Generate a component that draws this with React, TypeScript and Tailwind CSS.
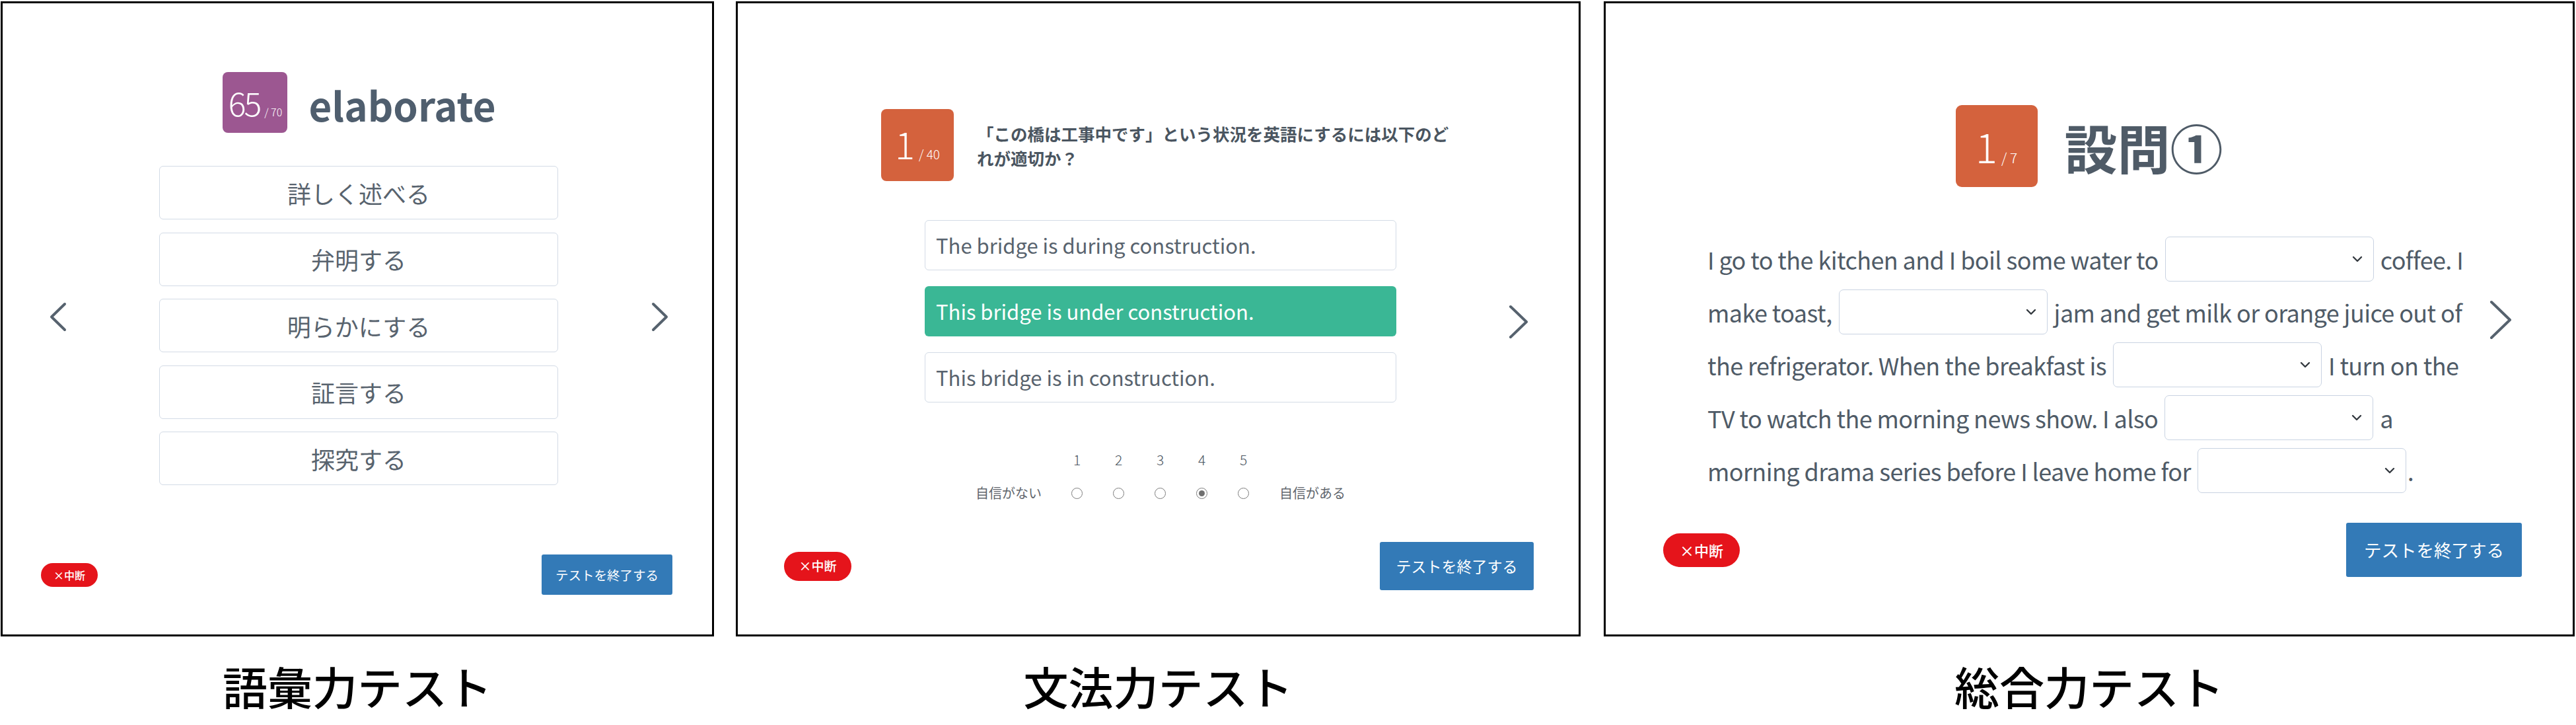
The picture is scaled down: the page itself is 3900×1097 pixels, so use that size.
import React from 'react';

const FONT = "font-['Noto_Sans_CJK_JP','Noto_Sans',sans-serif]";

const Chevron: React.FC<{ dir: 'left' | 'right'; w: number; h: number; className?: string }> = ({ dir, w, h, className }) => {
  const pts = dir === 'left' ? `${w - 3},3 3,${h / 2} ${w - 3},${h - 3}` : `3,3 ${w - 3},${h / 2} 3,${h - 3}`;
  return (
    <svg width={w} height={h} viewBox={`0 0 ${w} ${h}`} className={className}>
      <polyline points={pts} fill="none" stroke="#56626e" strokeWidth={4} strokeLinecap="round" strokeLinejoin="round" />
    </svg>
  );
};

const SelectBox: React.FC = () => (
  <div className="inline-flex w-[316px] h-[68px] shrink-0 items-center justify-end pr-[16px] border-[1.5px] border-[#c9d3e2] rounded-[7px] bg-white">
    <svg width="16" height="10" viewBox="0 0 16 10">
      <polyline points="2,2 8,8 14,2" fill="none" stroke="#343a40" strokeWidth={2.4} strokeLinecap="round" strokeLinejoin="round" />
    </svg>
  </div>
);

const Label: React.FC<{ text: string }> = ({ text }) => (
  <div className="mt-[41px] text-[68px] leading-none font-medium text-black">{text}</div>
);

// 語彙力テスト
const VocabPanel: React.FC = () => (
  <div className="w-[1080px] h-[961px] border-[3px] border-black flex flex-col bg-white">
    {/* header */}
    <div className="mt-[104px] flex justify-center items-center gap-[32px] pl-[6px]">
      <div className="w-[98px] h-[92px] rounded-[8px] bg-[#9c5791] flex items-baseline justify-center pt-[20px] text-white">
        <span className="text-[50px] font-extralight leading-none tracking-[-3px]">65</span>
        <span className="text-[16px] font-light leading-none ml-[7px]">/ 70</span>
      </div>
      <div className="text-[60px] font-bold leading-none text-[#4f5e6e] mt-[6px]">elaborate</div>
    </div>

    {/* options */}
    <div className="mt-[50px] flex items-start pl-[71px]">
      <Chevron dir="left" w={26} h={45} className="mt-[206px]" />
      <div className="ml-[140px] w-[604px] flex flex-col gap-[19.5px]">
        {['詳しく述べる', '弁明する', '明らかにする', '証言する', '探究する'].map((t) => (
          <div key={t} className="h-[81px] border-[1.5px] border-[#d3dbe6] rounded-[6px] flex items-center justify-center text-[36px] text-[#58636e]">
            {t}
          </div>
        ))}
      </div>
      <Chevron dir="right" w={26} h={45} className="ml-[141px] mt-[206px]" />
    </div>

    {/* footer */}
    <div className="mt-auto flex justify-between items-center pl-[58px] pr-[60px] pb-[60px]">
      <div className="w-[86px] h-[36px] rounded-full bg-[#e5141b] text-white text-[16px] font-medium flex items-center justify-center">×中断</div>
      <div className="w-[198px] h-[61px] rounded-[3px] bg-[#337ab7] text-white text-[19.5px] flex items-center justify-center">テストを終了する</div>
    </div>
  </div>
);

// 文法力テスト
const GrammarPanel: React.FC = () => (
  <div className="w-[1279px] h-[961px] border-[3px] border-black flex flex-col bg-white">
    {/* question */}
    <div className="mt-[160px] flex items-center pl-[217px]">
      <div className="w-[110px] h-[109px] rounded-[8px] bg-[#d4623d] flex items-baseline justify-center pt-[24px] text-white">
        <span className="text-[56px] font-extralight leading-none">1</span>
        <span className="text-[19px] font-light leading-none ml-[6px]">/ 40</span>
      </div>
      <div className="ml-[35px] text-[25.5px] font-bold leading-[37px] text-[#4a5560]">
        「この橋は工事中です」という状況を英語にするには以下のど
        <br />
        れが適切か？
      </div>
    </div>

    {/* choices */}
    <div className="mt-[59px] flex items-start pl-[283px]">
      <div className="w-[714px] flex flex-col gap-[24px]">
        <div className="h-[76px] border-[1.5px] border-[#d3dbe6] rounded-[6px] flex items-center pl-[16px] text-[31px] text-[#58636e]">
          The bridge is during construction.
        </div>
        <div className="h-[76px] rounded-[6px] bg-[#3ab795] flex items-center pl-[17px] text-[31px] text-white">
          This bridge is under construction.
        </div>
        <div className="h-[76px] border-[1.5px] border-[#d3dbe6] rounded-[6px] flex items-center pl-[16px] text-[31px] text-[#58636e]">
          This bridge is in construction.
        </div>
      </div>
      <Chevron dir="right" w={30} h={52} className="ml-[170px] mt-[128px]" />
    </div>

    {/* confidence */}
    <div className="mt-[71px] pl-[360px] grid grid-cols-[122px_63px_63px_63px_63px_63px_123px] grid-rows-[30px_30px] gap-y-[21px] text-[#5f666d]">
      <div />
      {[1, 2, 3, 4, 5].map((n) => (
        <div key={n} className="flex items-center justify-center text-[21px] leading-none font-light text-[#4b5560]">{n}</div>
      ))}
      <div />
      <div className="flex items-center text-[20px] leading-none">自信がない</div>
      {[1, 2, 3, 4, 5].map((n) => (
        <div key={n} className="flex items-center justify-center">
          <div className="w-[17px] h-[17px] rounded-full border-[1.5px] border-[#7c7c7c] bg-white flex items-center justify-center">
            {n === 4 && <div className="w-[9px] h-[9px] rounded-full bg-[#707070]" />}
          </div>
        </div>
      ))}
      <div className="flex items-center justify-end text-[20px] leading-none">自信がある</div>
    </div>

    {/* footer */}
    <div className="mt-auto flex justify-between items-center pl-[70px] pr-[68px] pb-[67px]">
      <div className="w-[102px] h-[44px] rounded-full bg-[#e5141b] text-white text-[19px] font-medium flex items-center justify-center">×中断</div>
      <div className="w-[233px] h-[73px] rounded-[3px] bg-[#337ab7] text-white text-[23px] flex items-center justify-center">テストを終了する</div>
    </div>
  </div>
);

// 総合力テスト
const ComprehensivePanel: React.FC = () => (
  <div className="w-[1470px] h-[961px] border-[3px] border-black flex flex-col bg-white">
    {/* header */}
    <div className="mt-[154px] flex justify-center items-center gap-[41px]">
      <div className="w-[124px] h-[124px] rounded-[9px] bg-[#d4623d] flex items-baseline justify-center pt-[30px] text-white">
        <span className="text-[62px] font-extralight leading-none">1</span>
        <span className="text-[21px] font-light leading-none ml-[6px]">/ 7</span>
      </div>
      <div className="text-[80px] font-bold leading-none text-[#4f5b67]">設問①</div>
    </div>

    {/* passage */}
    <div className="mt-[69px] flex items-start pl-[154px]">
      <div className="w-[1150px] flex flex-col text-[36px] text-[#4f5b67] tracking-[-0.6px]">
        <div className="h-[80px] flex items-center gap-[10px]">
          <span>I go to the kitchen and I boil some water to</span>
          <SelectBox />
          <span>coffee. I</span>
        </div>
        <div className="h-[80px] flex items-center gap-[10px]">
          <span>make toast,</span>
          <SelectBox />
          <span>jam and get milk or orange juice out of</span>
        </div>
        <div className="h-[80px] flex items-center gap-[10px]">
          <span>the refrigerator. When the breakfast is</span>
          <SelectBox />
          <span>I turn on the</span>
        </div>
        <div className="h-[80px] flex items-center gap-[10px]">
          <span>TV to watch the morning news show. I also</span>
          <SelectBox />
          <span>a</span>
        </div>
        <div className="h-[80px] flex items-center gap-[10px]">
          <span>morning drama series before I leave home for</span>
          <div className="flex items-center">
            <SelectBox />
            <span className="ml-[2px]">.</span>
          </div>
        </div>
      </div>
      <Chevron dir="right" w={34} h={60} className="ml-[34px] mt-[102px]" />
    </div>

    {/* footer */}
    <div className="mt-auto flex justify-between items-center pl-[87px] pr-[77px] pb-[87px]">
      <div className="w-[116px] h-[51px] rounded-full bg-[#e5141b] text-white text-[22px] font-medium flex items-center justify-center">×中断</div>
      <div className="w-[266px] h-[82px] rounded-[3px] bg-[#337ab7] text-white text-[26.5px] flex items-center justify-center">テストを終了する</div>
    </div>
  </div>
);

export default function App() {
  return (
    <div className={`w-[3900px] h-[1097px] bg-white flex items-start pt-[2px] pl-[1px] ${FONT}`}>
      <div className="flex flex-col items-center">
        <VocabPanel />
        <Label text="語彙力テスト" />
      </div>
      <div className="ml-[33px] flex flex-col items-center">
        <GrammarPanel />
        <Label text="文法力テスト" />
      </div>
      <div className="ml-[35px] flex flex-col items-center">
        <ComprehensivePanel />
        <Label text="総合力テスト" />
      </div>
    </div>
  );
}
